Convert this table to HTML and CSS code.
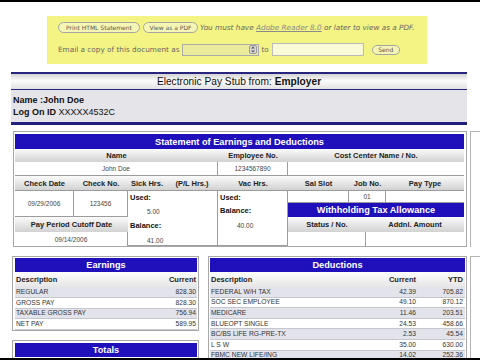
FILE: index.html
```html
<!DOCTYPE html>
<html lang="en">
<head>
  <meta charset="UTF-8">
  <meta name="viewport" content="width=device-width, initial-scale=1.0">
  <title>Electronic Pay Stub</title>
  <link rel="stylesheet" href="styles.css">
</head>
<body>
  <div class="frame-edge top"></div>
  <div class="sheet">
    <div class="main">
      <div class="actions">
        <div class="action-row">
          <span class="pill print">Print HTML Statement</span>
          <span class="pill pdf">View as a PDF</span>
          <span class="note">You must have <u>Adobe Reader 8.0</u> or later to view as a PDF.</span>
        </div>
        <div class="action-row email">
          <span>Email a copy of this document as</span>
          <span class="select">
            <svg width="8" height="9" viewBox="0 0 8 9">
              <rect x="0.5" y="0.5" width="7" height="8" rx="1.5" fill="#d8d8d8" stroke="#999"/>
              <path d="M2 3.5 L4 1.5 L6 3.5Z M2 5.5 L4 7.5 L6 5.5Z" fill="#555"/>
            </svg>
          </span>
          <span class="to">to</span>
          <span class="field"></span>
          <span class="pill send">Send</span>
        </div>
      </div>

      <div class="stub-head">
        <div class="stub-title">Electronic Pay Stub from: <b>Employer</b></div>
        <div class="stub-info">
          <b>Name :John Doe</b><br>
          <b>Log On ID</b> XXXXX4532C
        </div>
      </div>

      <div class="statement">
        <div class="bar c-all">Statement of Earnings and Deductions</div>

        <div class="hd c-name">Name</div>
        <div class="hd c-emp">Employee No.</div>
        <div class="hd c-cost">Cost Center Name / No.</div>

        <div class="val c-name">John Doe</div>
        <div class="val c-emp">1234567890</div>
        <div class="val c-cost"></div>

        <div class="hd">Check Date</div>
        <div class="hd">Check No.</div>
        <div class="hd">Sick Hrs.</div>
        <div class="hd">(P/L Hrs.)</div>
        <div class="hd">Vac Hrs.</div>
        <div class="hd">Sal Slot</div>
        <div class="hd c-job">Job No.</div>
        <div class="hd">Pay Type</div>

        <div class="val c-date">09/29/2006</div>
        <div class="val c-no">123456</div>
        <div class="val hours c-sick">
          <b>Used:</b>
          <span>5.00</span>
          <b>Balance:</b>
          <span>41.00</span>
        </div>
        <div class="val hours c-vac">
          <b>Used:</b>
          <span></span>
          <b>Balance:</b>
          <span>40.00</span>
        </div>
        <div class="val c-sal"></div>
        <div class="val c-job">01</div>
        <div class="val c-pay"></div>

        <div class="bar c-tax">Withholding Tax Allowance</div>

        <div class="hd c-cut">Pay Period Cutoff Date</div>
        <div class="hd c-status">Status / No.</div>
        <div class="hd c-addl">Addnl. Amount</div>

        <div class="val c-cutval">09/14/2006</div>
        <div class="val c-statusval"></div>
        <div class="val c-addlval"></div>
      </div>

      <div class="lower">
        <div class="earn-col">
          <div class="box earnings">
            <table class="list">
              <colgroup><col><col class="w-cur"></colgroup>
              <tr><th colspan="2" class="bar">Earnings</th></tr>
              <tr class="list-hd"><td>Description</td><td class="num">Current</td></tr>
              <tr><td>REGULAR</td><td class="num">828.30</td></tr>
              <tr><td>GROSS PAY</td><td class="num">828.30</td></tr>
              <tr><td>TAXABLE GROSS PAY</td><td class="num">756.94</td></tr>
              <tr><td>NET PAY</td><td class="num">589.95</td></tr>
            </table>
          </div>
          <div class="box totals">
            <div class="bar totals-bar">Totals</div>
          </div>
        </div>

        <div class="box deductions">
          <table class="list">
            <colgroup><col><col class="w-cur"><col class="w-ytd"></colgroup>
            <tr><th colspan="3" class="bar">Deductions</th></tr>
            <tr class="list-hd"><td>Description</td><td class="num">Current</td><td class="num">YTD</td></tr>
            <tr><td>FEDERAL W/H TAX</td><td class="num">42.39</td><td class="num">705.82</td></tr>
            <tr><td>SOC SEC EMPLOYEE</td><td class="num">49.10</td><td class="num">870.12</td></tr>
            <tr><td>MEDICARE</td><td class="num">11.46</td><td class="num">203.51</td></tr>
            <tr><td>BLUEOPT SINGLE</td><td class="num">24.53</td><td class="num">458.66</td></tr>
            <tr><td>BC/BS LIFE RG-PRE-TX</td><td class="num">2.53</td><td class="num">45.54</td></tr>
            <tr><td>L S W</td><td class="num">35.00</td><td class="num">630.00</td></tr>
            <tr><td>FBMC NEW LIFE/ING</td><td class="num">14.02</td><td class="num">252.36</td></tr>
          </table>
        </div>
      </div>
    </div>

    <div class="side">
      <div class="side-box upper"></div>
      <div class="side-box lower-box"></div>
    </div>
  </div>
  <div class="frame-edge bottom"></div>
</body>
</html>
```

FILE: styles.css
```css
html, body {
  margin: 0;
  overflow: hidden;
}
body {
  width: 480px;
  height: 360px;
  background: #fff;
  font-family: "Liberation Sans", Arial, sans-serif;
  color: #111;
}

/* video frame edges */
.frame-edge {
  position: fixed;
  left: 0;
  right: 0;
  height: 2px;
  background: #000;
  z-index: 2;
}
.frame-edge.top { top: 0; }
.frame-edge.bottom { bottom: 0; }

.sheet {
  display: flex;
}
.main {
  width: 470px;
  flex: none;
}

/* yellow action panel */
.actions {
  margin: 16px 0 0 47px;
  width: 380px;
  height: 48px;
  box-sizing: border-box;
  padding: 6px 0 0 11px;
  background: #f4f485;
  font-family: "DejaVu Sans", Verdana, sans-serif;
  font-size: 7.3px;
  color: #666;
}
.action-row {
  display: flex;
  align-items: center;
  height: 11px;
  white-space: nowrap;
}
.action-row.email {
  margin-top: 10px;
  height: 13px;
}
.pill {
  height: 11px;
  box-sizing: border-box;
  border: 1px solid #a4a4a4;
  border-radius: 6px;
  display: flex;
  align-items: center;
  justify-content: center;
  font-size: 6px;
  color: #555;
  background: #f6f6b4;
  margin-right: 3px;
}
.pill.print { width: 82px; }
.pill.pdf { width: 55px; margin-right: 2px; }
.pill.send { width: 28px; height: 10px; margin-left: 8px; }
.note { font-style: italic; }
.note u { color: #8a8a8a; }
.select {
  width: 77px;
  height: 12px;
  margin-left: 2px;
  box-sizing: border-box;
  border: 1px solid #aaa;
  background: #ebeb9c;
  display: flex;
  align-items: center;
  justify-content: flex-end;
  padding-right: 1px;
}
.to { margin: 0 3px; }
.field {
  width: 92px;
  height: 13px;
  box-sizing: border-box;
  border: 1px solid #bbb;
  background: #fafad6;
}

/* pay stub header */
.stub-head {
  margin: 8px 0 0 11px;
  width: 456px;
  border-top: 2px solid #27257e;
  border-bottom: 3px solid #22207a;
}
.stub-title {
  height: 15px;
  border-bottom: 1px solid #27257e;
  background: linear-gradient(#d4d4d4, #fbfbfb 45%, #e2e2e2);
  text-align: center;
  font-size: 10.2px;
  line-height: 15px;
}
.stub-info {
  height: 32px;
  box-sizing: border-box;
  padding: 4px 2px;
  background: #e4e4e9;
  font-size: 9px;
  line-height: 12px;
}

/* statement grid */
.statement {
  margin: 6px 0 0 13px;
  width: 449px;
  border: 1px solid #a8a8a8;
  padding: 2px 2px 0 1px;
  display: grid;
  grid-template-columns: 59px 54px 38px 52px 70px 61px 17px 20px 78px;
  grid-template-rows: 15px 13px 14px 14px 13px 14px 15px 14px;
}
.bar {
  background: #2010bb;
  color: #fff;
  font-weight: bold;
  font-size: 9.2px;
  display: flex;
  align-items: center;
  justify-content: center;
}
.hd {
  background: linear-gradient(#fbfbfb, #d2d2d2);
  font-weight: bold;
  font-size: 7.5px;
  color: #222;
  display: flex;
  align-items: center;
  justify-content: center;
  white-space: nowrap;
}
.val {
  box-sizing: border-box;
  border-right: 1px solid #9c9c9c;
  border-bottom: 1px solid #9c9c9c;
  font-size: 6.5px;
  color: #444;
  display: flex;
  align-items: center;
  justify-content: center;
}
.c-all { grid-column: 1 / -1; }
.c-name { grid-column: 1 / 5; }
.c-emp { grid-column: 5 / 6; }
.c-cost { grid-column: 6 / -1; border-right: 0; }
.c-job { grid-column: 7 / 9; }
.c-date { grid-column: 1; grid-row: 5 / 7; border-top: 1px solid #9c9c9c; }
.c-no { grid-column: 2; grid-row: 5 / 7; border-top: 1px solid #9c9c9c; }
.c-sick { grid-column: 3 / 5; grid-row: 5 / 9; border-top: 1px solid #9c9c9c; }
.c-vac { grid-column: 5; grid-row: 5 / 9; border-top: 1px solid #9c9c9c; }
.c-sal { grid-column: 6; grid-row: 5; border-top: 1px solid #9c9c9c; }
.val.c-job { grid-row: 5; border-top: 1px solid #9c9c9c; }
.c-pay { grid-column: 9; grid-row: 5; border-top: 1px solid #9c9c9c; border-right: 0; }
.c-tax { grid-column: 6 / -1; grid-row: 6; }
.c-cut { grid-column: 1 / 3; grid-row: 7; }
.c-status { grid-column: 6 / 8; grid-row: 7; }
.c-addl { grid-column: 8 / -1; grid-row: 7; }
.c-cutval { grid-column: 1 / 3; grid-row: 8; border-bottom: 0; }
.c-statusval { grid-column: 6 / 8; grid-row: 8; border-bottom: 0; }
.c-addlval { grid-column: 8 / -1; grid-row: 8; border: 0; }

.hours {
  flex-direction: column;
  align-items: stretch;
  justify-content: flex-start;
  padding-left: 2px;
}
.hours b {
  font-size: 7.5px;
  color: #111;
  line-height: 13px;
}
.hours span {
  padding-left: 17px;
  line-height: 15px;
}
.hours b + span + b { line-height: 14px; }

/* earnings / deductions */
.lower {
  display: flex;
  align-items: flex-start;
  gap: 9px;
  margin: 9px 0 0 12px;
}
.earn-col {
  width: 187px;
  flex: none;
}
.box {
  border: 1px solid #a8a8a8;
  padding: 1px 1px 0 2px;
}
.earnings .list { width: 182px; }
.totals {
  margin-top: 9px;
  padding-top: 2px;
  height: 30px;
}
.totals-bar { height: 14px; }
.deductions {
  flex: none;
  width: 255px;
  padding-left: 1px;
}
.deductions .list { width: 255px; }

.list {
  table-layout: fixed;
  border-collapse: collapse;
  border-spacing: 0;
  font-size: 6.7px;
  color: #333;
}
.list th {
  height: 14px;
  padding: 0;
  display: table-cell;
  text-align: center;
}
.list td {
  padding: 0 0 0 1px;
  height: 9.6px;
  line-height: 8px;
  border-bottom: 1px solid #c6c6ce;
  white-space: nowrap;
}
.earnings .list td { height: 9.75px; }
.list tr:nth-child(odd) td { background: #e3e3eb; }
.list tr.list-hd td {
  height: 15px;
  background: linear-gradient(#fdfdfd, #e6e6e6);
  font-weight: bold;
  font-size: 7.5px;
  color: #222;
  border-bottom: 0;
}
.list .num {
  text-align: right;
  padding: 0 1px 0 0;
}
.deductions .num { padding-right: 2px; }
.w-cur { width: 55px; }
.w-ytd { width: 47px; }
.earnings .w-cur { width: 60px; }

/* neighbouring column cut off at the right */
.side {
  flex: none;
  width: 40px;
  padding-top: 131px;
}
.side-box {
  border-left: 1px solid #b4b4b4;
  border-top: 1px solid #b4b4b4;
  height: 115px;
}
.side-box.lower-box {
  margin-top: 9px;
  height: 110px;
}
```
